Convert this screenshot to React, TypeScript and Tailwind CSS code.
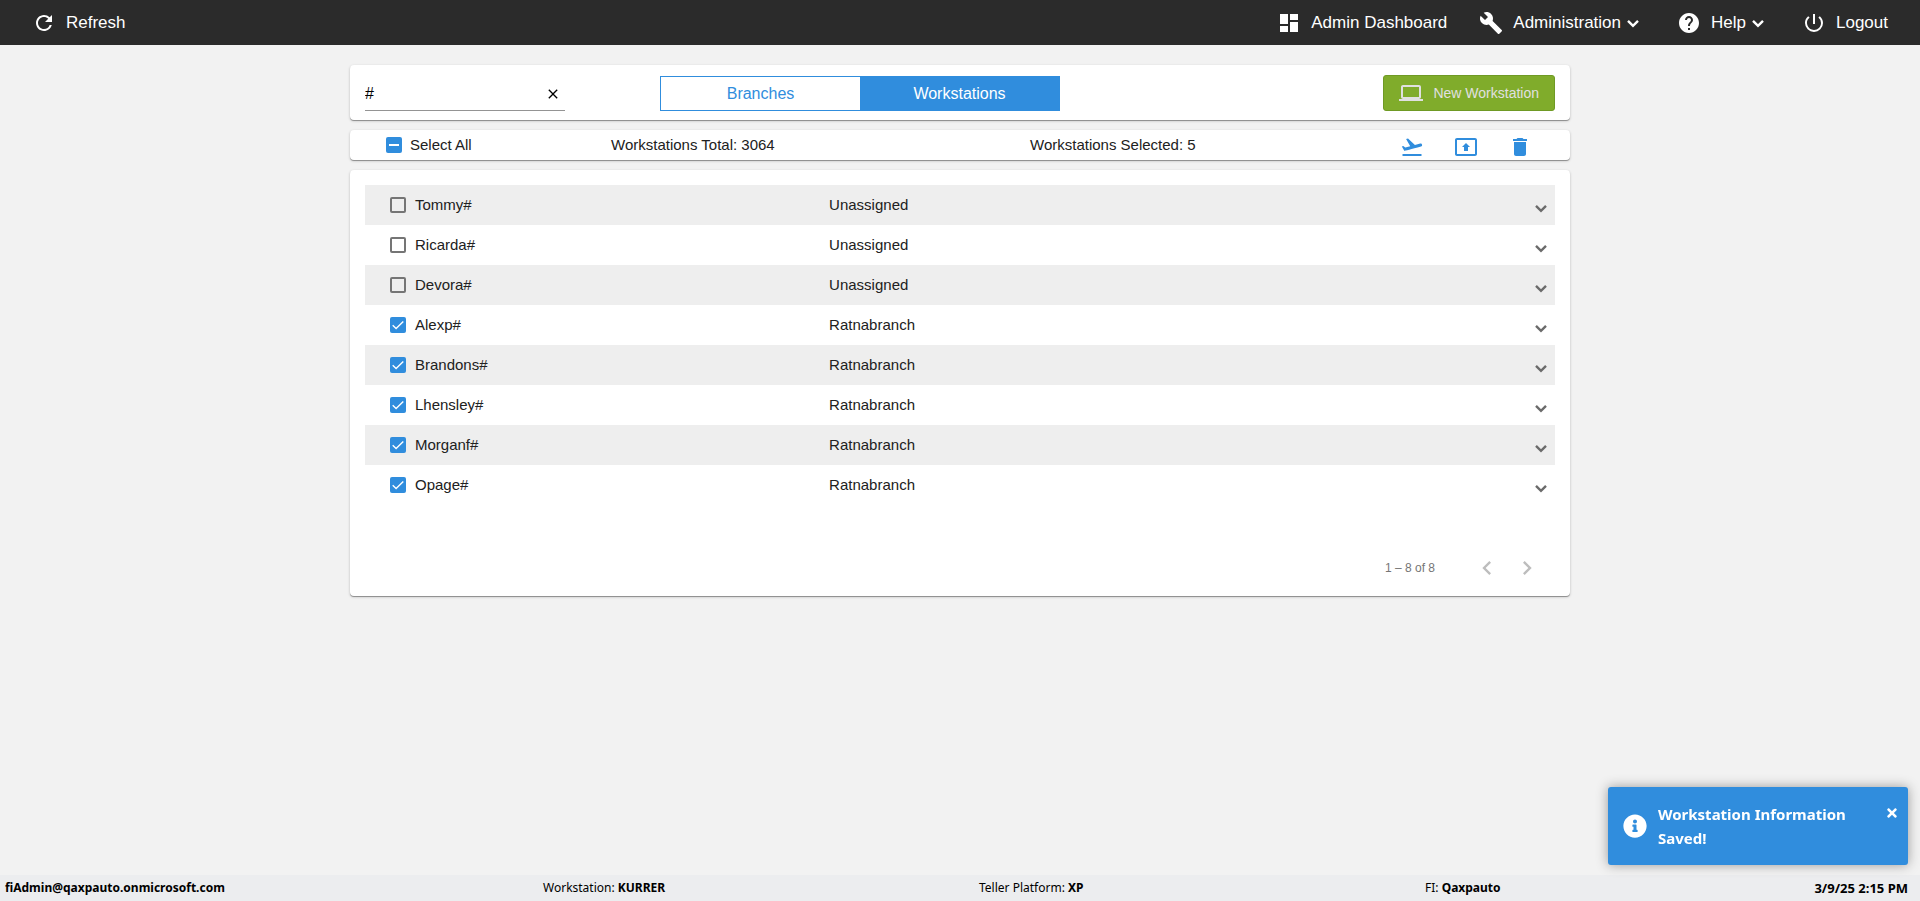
import { useState } from 'react'
import type { IconType } from 'react-icons'
import {
  MdBuild,
  MdChevronLeft,
  MdChevronRight,
  MdClose,
  MdDashboard,
  MdDelete,
  MdFlightTakeoff,
  MdHelp,
  MdLaptop,
  MdPowerSettingsNew,
  MdPresentToAll,
  MdRefresh,
} from 'react-icons/md'
import { FaInfoCircle, FaTimes } from 'react-icons/fa'

type Workstation = { name: string; branch: string; selected: boolean }

const initialWorkstations: Workstation[] = [
  { name: 'Tommy#', branch: 'Unassigned', selected: false },
  { name: 'Ricarda#', branch: 'Unassigned', selected: false },
  { name: 'Devora#', branch: 'Unassigned', selected: false },
  { name: 'Alexp#', branch: 'Ratnabranch', selected: true },
  { name: 'Brandons#', branch: 'Ratnabranch', selected: true },
  { name: 'Lhensley#', branch: 'Ratnabranch', selected: true },
  { name: 'Morganf#', branch: 'Ratnabranch', selected: true },
  { name: 'Opage#', branch: 'Ratnabranch', selected: true },
]

const card =
  'bg-white rounded shadow-[0_1px_3px_0_rgba(0,0,0,0.2),0_1px_1px_0_rgba(0,0,0,0.14),0_1px_0_0_rgba(0,0,0,0.2)]'

export default function App() {
  const [rows, setRows] = useState(initialWorkstations)
  const [search, setSearch] = useState('#')
  const [toastOpen, setToastOpen] = useState(true)

  const selectedCount = rows.filter((r) => r.selected).length
  const allSelected = selectedCount === rows.length

  function toggleRow(name: string) {
    setRows(rows.map((r) => (r.name === name ? { ...r, selected: !r.selected } : r)))
  }

  function toggleAll() {
    setRows(rows.map((r) => ({ ...r, selected: !allSelected })))
  }

  return (
    <div className="min-h-screen flex flex-col bg-[#f2f2f2] text-[#212121] font-['Liberation_Sans',Arial,sans-serif]">
      <header className="h-[45px] px-8 bg-[#2b2b2b] text-white text-[17px] flex items-center justify-between">
        <NavButton icon={MdRefresh} label="Refresh" />
        <nav className="flex items-center gap-8">
          <NavButton icon={MdDashboard} label="Admin Dashboard" />
          <NavButton icon={MdBuild} label="Administration" menu />
          <NavButton icon={MdHelp} label="Help" menu />
          <NavButton icon={MdPowerSettingsNew} label="Logout" />
        </nav>
      </header>

      <main className="flex-1 w-full max-w-[1220px] mx-auto pt-5 flex flex-col gap-2.5">
        <section className={`${card} h-[55px] px-[15px] pb-[9px] grid grid-cols-[295px_400px_1fr] items-end`}>
          <div className="w-[200px] h-[34px] flex items-center border-b border-[#949494]">
            <input
              aria-label="Search workstations"
              className="min-w-0 flex-1 bg-transparent text-base text-black outline-none"
              value={search}
              onChange={(e) => setSearch(e.target.value)}
            />
            <button aria-label="Clear search" className="p-1 text-black" onClick={() => setSearch('')}>
              <MdClose className="size-4" />
            </button>
          </div>
          <div className="h-[35px] grid grid-cols-2 border border-[#308ddd] text-base">
            <button className="text-[#308ddd]">Branches</button>
            <button className="bg-[#308ddd] text-white">Workstations</button>
          </div>
          <button className="justify-self-end h-9 px-[15px] flex items-center gap-2.5 rounded-[3px] border border-[#6f9a24] bg-[#80ac2b] text-sm text-[#e0e0e0]">
            <MdLaptop className="size-6" />
            New Workstation
          </button>
        </section>

        <section className={`${card} h-[30px] pl-9 pr-[38px] grid grid-cols-[225px_419px_1fr] items-center text-[15px]`}>
          <label className="flex items-center gap-2">
            <Checkbox checked={allSelected} indeterminate={selectedCount > 0 && !allSelected} onChange={toggleAll} />
            Select All
          </label>
          <span>Workstations Total: 3064</span>
          <div className="flex items-center justify-between">
            <span>Workstations Selected: {selectedCount}</span>
            <div className="pt-1 flex gap-[30px] text-[#308ddd]">
              <button aria-label="Deploy">
                <MdFlightTakeoff className="size-6" />
              </button>
              <button aria-label="Assign">
                <MdPresentToAll className="size-6" />
              </button>
              <button aria-label="Delete">
                <MdDelete className="size-6" />
              </button>
            </div>
          </div>
        </section>

        <section className={`${card} px-[15px] pt-[15px] pb-2`}>
          <table className="w-full table-fixed text-[15px]">
            <tbody>
              {rows.map((r) => (
                <tr key={r.name} className="h-10 odd:bg-[#eeeeee]">
                  <td className="w-[39%] pl-[25px]">
                    <label className="inline-flex items-center gap-[9px] align-middle">
                      <Checkbox checked={r.selected} onChange={() => toggleRow(r.name)} />
                      {r.name}
                    </label>
                  </td>
                  <td>{r.branch}</td>
                  <td className="w-12 pt-1.5 pr-0.5">
                    <button aria-label={`Expand ${r.name}`} className="ml-auto block text-[#6b6b6b]">
                      <Chevron />
                    </button>
                  </td>
                </tr>
              ))}
            </tbody>
          </table>
          <div className="mt-[43px] pr-2 flex items-center justify-end text-xs text-[#757575]">
            <span className="mr-8">1 – 8 of 8</span>
            <button aria-label="Previous page" className="size-10 grid place-items-center text-[#bdbdbd]">
              <MdChevronLeft className="size-7" />
            </button>
            <button aria-label="Next page" className="size-10 grid place-items-center text-[#bdbdbd]">
              <MdChevronRight className="size-7" />
            </button>
          </div>
        </section>
      </main>

      <footer className="h-[26px] pl-[5px] pr-3 grid grid-cols-[538fr_436fr_446fr_483fr] items-center bg-[#ecedef] text-black text-xs font-['Noto_Sans','Open_Sans',sans-serif]">
        <b>fiAdmin@qaxpauto.onmicrosoft.com</b>
        <FooterItem label="Workstation" value="KURRER" />
        <FooterItem label="Teller Platform" value="XP" />
        <div className="flex items-center justify-between">
          <FooterItem label="FI" value="Qaxpauto" />
          <b className="text-[13px] leading-4">3/9/25 2:15 PM</b>
        </div>
      </footer>

      {toastOpen && (
        <div
          role="alert"
          className="fixed right-3 bottom-9 w-[300px] py-[15px] pl-[15px] pr-[5px] flex items-center rounded-[3px] bg-[#308ddd] text-white shadow-[0_0_12px_#999999] font-['Noto_Sans','Open_Sans',sans-serif]"
        >
          <FaInfoCircle className="size-6 shrink-0" />
          <p className="ml-[11px] flex-1 text-[15px] leading-6 font-bold">Workstation Information Saved!</p>
          <button aria-label="Close" className="self-start p-1" onClick={() => setToastOpen(false)}>
            <FaTimes className="size-3.5" />
          </button>
        </div>
      )}
    </div>
  )
}

type NavButtonProps = { icon: IconType; label: string; menu?: boolean }

function NavButton({ icon: Icon, label, menu }: NavButtonProps) {
  return (
    <button className="flex items-center gap-2.5">
      <Icon className="size-6" />
      <span className="flex items-center">
        {label}
        {menu && <Chevron />}
      </span>
    </button>
  )
}

function Chevron() {
  return (
    <svg viewBox="0 0 24 24" fill="none" stroke="currentColor" strokeWidth="2.4" className="size-6" aria-hidden="true">
      <path d="M7 9.8l5 5 5-5" />
    </svg>
  )
}

type CheckboxProps = { checked: boolean; indeterminate?: boolean; onChange: () => void }

function Checkbox({ checked, indeterminate, onChange }: CheckboxProps) {
  const filled = checked || indeterminate
  return (
    <span className="relative size-4">
      <input
        type="checkbox"
        checked={checked}
        onChange={onChange}
        className={`block size-4 appearance-none rounded-[2px] ${filled ? 'bg-[#308ddd]' : 'border-2 border-[#757575]'}`}
      />
      {filled && (
        <svg viewBox="0 0 16 16" fill="none" stroke="white" className="pointer-events-none absolute inset-0 size-4">
          {indeterminate ? <path d="M3 8h10" strokeWidth="2" /> : <path d="M2.7 8.2l3.4 3.4 7.2-7.2" strokeWidth="1.4" />}
        </svg>
      )}
    </span>
  )
}

function FooterItem({ label, value }: { label: string; value: string }) {
  return (
    <span>
      {label}: <b>{value}</b>
    </span>
  )
}
